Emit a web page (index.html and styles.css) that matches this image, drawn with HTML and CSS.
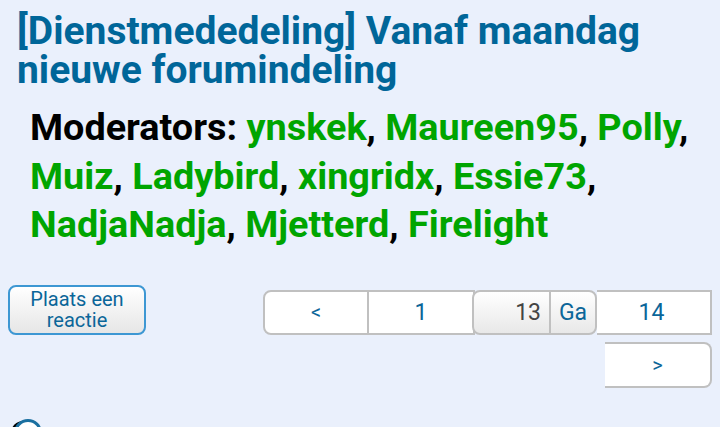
FILE: index.html
```html
<!DOCTYPE html>
<html>
<head>
<meta charset="utf-8">
<link rel="stylesheet" href="styles.css">
</head>
<body>
<div class="page">
  <h1 class="title">[Dienstmededeling] Vanaf maandag nieuwe forumindeling</h1>
  <p class="mods">Moderators: <a class="mod">ynskek</a>, <a class="mod">Maureen95</a>, <a class="mod">Polly</a>, <a class="mod">Muiz</a>, <a class="mod">Ladybird</a>, <a class="mod">xingridx</a>, <a class="mod">Essie73</a>, <a class="mod">NadjaNadja</a>, <a class="mod">Mjetterd</a>, <a class="mod">Firelight</a></p>
  <div class="actions">
    <button class="reply">Plaats een<br>reactie</button>
    <div class="pager">
      <div class="row1">
        <span class="seg first">&lt;</span>
        <span class="seg">1</span>
        <span class="jump"><span class="num">13</span><span class="go">Ga</span></span>
        <span class="seg last">14</span>
      </div>
      <div class="row2">
        <span class="seg next">&gt;</span>
      </div>
    </div>
  </div>
  <div class="avatar"></div>
</div>
</body>
</html>
```
FILE: styles.css
```css
html, body {
  margin: 0;
  padding: 0;
  background: #eaf0fc;
  font-family: Roboto, "Noto Sans", sans-serif;
}
.page {
  position: relative;
  height: 427px;
  overflow: hidden;
}
.title {
  margin: 0;
  padding: 12px 0 0 17px;
  font-size: 39px;
  line-height: 39px;
  font-weight: 700;
  color: #006699;
  width: 690px;
}
.mods {
  margin: 0;
  padding: 13px 0 0 30px;
  font-size: 37.8px;
  line-height: 48.5px;
  font-weight: 700;
  color: #000;
  width: 680px;
}
.mod {
  color: #00a500;
}
.actions {
  display: flex;
  margin-top: 36px;
  padding-left: 8px;
}
.reply {
  width: 138px;
  height: 50px;
  border: 2px solid #3d97d3;
  border-radius: 8px;
  background: linear-gradient(#ffffff, #e6e6e6);
  color: #0b6699;
  font-family: Roboto, sans-serif;
  font-size: 20px;
  line-height: 21px;
  padding: 0;
  box-sizing: border-box;
}
.pager {
  margin-left: 117px;
  margin-top: 5px;
}
.row1 {
  display: flex;
  height: 45px;
}
.seg {
  display: flex;
  align-items: center;
  justify-content: center;
  box-sizing: border-box;
  background: #fff;
  border: 2px solid #c0c0c0;
  border-left-width: 0;
  color: #0b6699;
  font-size: 23px;
  height: 45px;
  width: 106px;
}
.seg.first {
  border-left-width: 2px;
  border-radius: 8px 0 0 8px;
  width: 106px;
  font-size: 20px;
}
.seg.last {
  width: 115px;
  border-left-width: 0;
  padding-right: 4px;
}
.jump {
  display: flex;
  box-sizing: border-box;
  height: 45px;
  width: 125px;
  margin-left: -3px;
  border: 2px solid #c0c0c0;
  border-radius: 8px;
  background: linear-gradient(#ffffff, #e8e8e8);
  position: relative;
}
.num {
  width: 77px;
  box-sizing: border-box;
  padding-right: 8px;
  display: flex;
  align-items: center;
  justify-content: flex-end;
  border-right: 2px solid #c0c0c0;
  color: #444;
  font-size: 23px;
}
.go {
  flex: 1;
  display: flex;
  align-items: center;
  justify-content: center;
  color: #0b6699;
  font-size: 23px;
}
.row2 {
  display: flex;
  justify-content: flex-end;
  margin-top: 7px;
}
.seg.next {
  width: 107px;
  height: 46px;
  border-left-width: 0;
  border-top-width: 2px;
  border-radius: 0 8px 8px 0;
  font-size: 20px;
}
.avatar {
  position: absolute;
  left: 14px;
  top: 419px;
  width: 28px;
  height: 28px;
  box-sizing: border-box;
  border-radius: 50%;
  background: #fff;
  border: 3px solid #1a6fa0;
  box-shadow: -5px 0 0 -2px #000;
}
```
